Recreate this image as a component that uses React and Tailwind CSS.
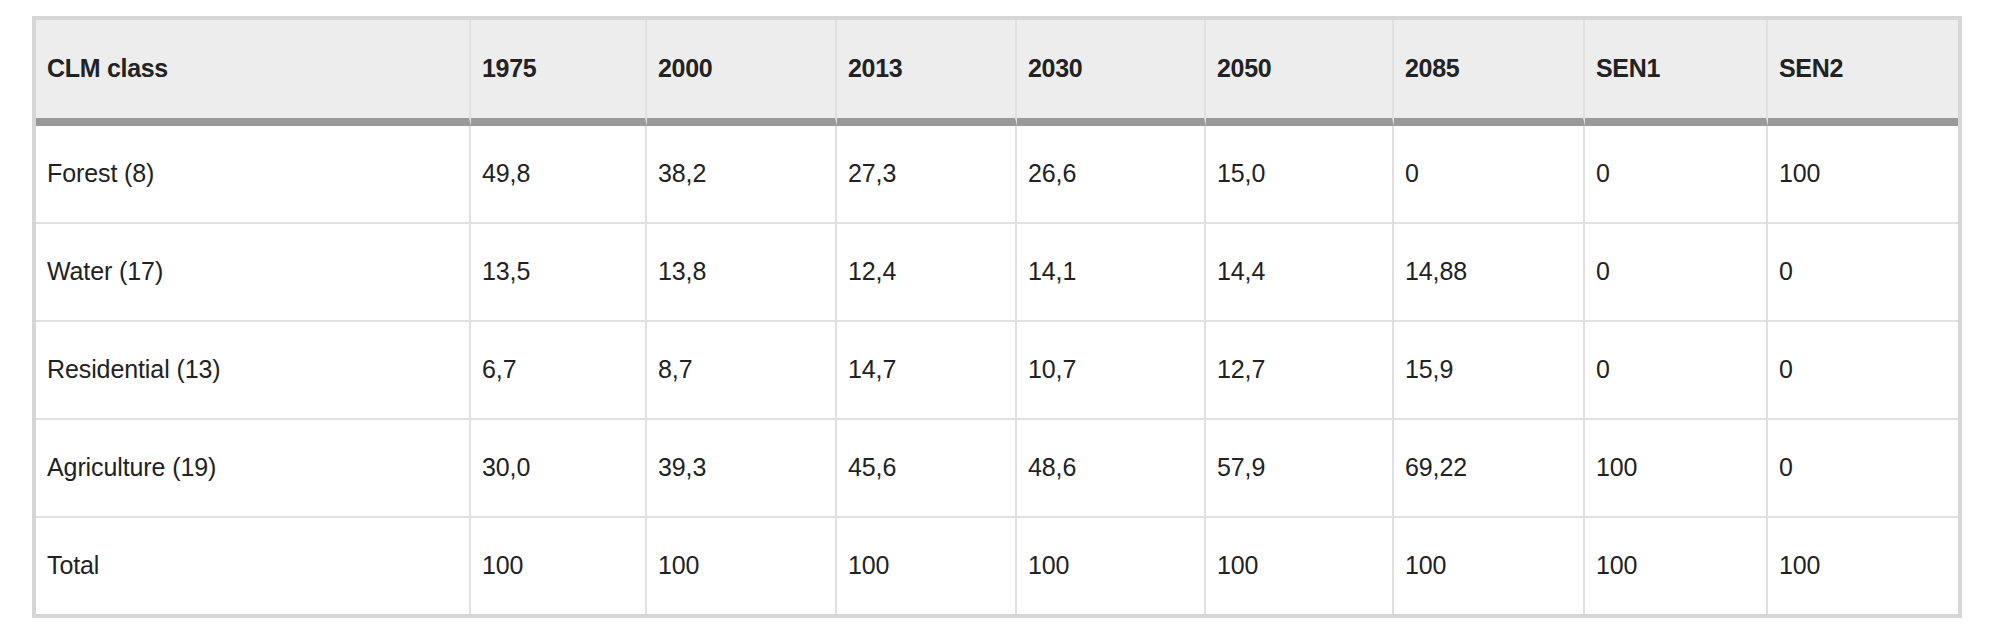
const columns = ["CLM class", "1975", "2000", "2013", "2030", "2050", "2085", "SEN1", "SEN2"];

const widths = [
  "w-[435px]",
  "w-[176px]",
  "w-[190px]",
  "w-[180px]",
  "w-[189px]",
  "w-[188px]",
  "w-[191px]",
  "w-[183px]",
  "w-[190px]",
];

const rows = [
  ["Forest (8)", "49,8", "38,2", "27,3", "26,6", "15,0", "0", "0", "100"],
  ["Water (17)", "13,5", "13,8", "12,4", "14,1", "14,4", "14,88", "0", "0"],
  ["Residential (13)", "6,7", "8,7", "14,7", "10,7", "12,7", "15,9", "0", "0"],
  ["Agriculture (19)", "30,0", "39,3", "45,6", "48,6", "57,9", "69,22", "100", "0"],
  ["Total", "100", "100", "100", "100", "100", "100", "100", "100"],
];

export default function App() {
  return (
    <div
      className="min-h-[634px] bg-white pt-[16px] pl-[32px]"
      style={{ fontFamily: '"Liberation Sans", Arial, sans-serif' }}
    >
      <table className="table-fixed w-[1930px] border-separate border-spacing-0 border-4 border-[#d6d6d6] text-[25px] text-[#222]">
        <colgroup>
          {widths.map((w, i) => (
            <col key={i} className={w} />
          ))}
        </colgroup>
        <thead>
          <tr>
            {columns.map((c, i) => (
              <th
                key={c}
                className={
                  "h-[106px] bg-[#ededed] pl-[11px] text-left align-middle font-bold tracking-[-0.3px] border-b-8 border-b-[#999] " +
                  (i < columns.length - 1 ? "border-r-2 border-r-[#e0e0e0]" : "")
                }
              >
                {c}
              </th>
            ))}
          </tr>
        </thead>
        <tbody>
          {rows.map((r, ri) => (
            <tr key={ri}>
              {r.map((cell, ci) => (
                <td
                  key={ci}
                  className={
                    "pl-[11px] align-middle font-normal tracking-[-0.1px] " +
                    (ri < rows.length - 1 ? "h-[98px] border-b-2 border-b-[#e0e0e0] " : "h-[96px] ") +
                    (ci < r.length - 1 ? "border-r-2 border-r-[#e0e0e0]" : "")
                  }
                >
                  {cell}
                </td>
              ))}
            </tr>
          ))}
        </tbody>
      </table>
    </div>
  );
}
